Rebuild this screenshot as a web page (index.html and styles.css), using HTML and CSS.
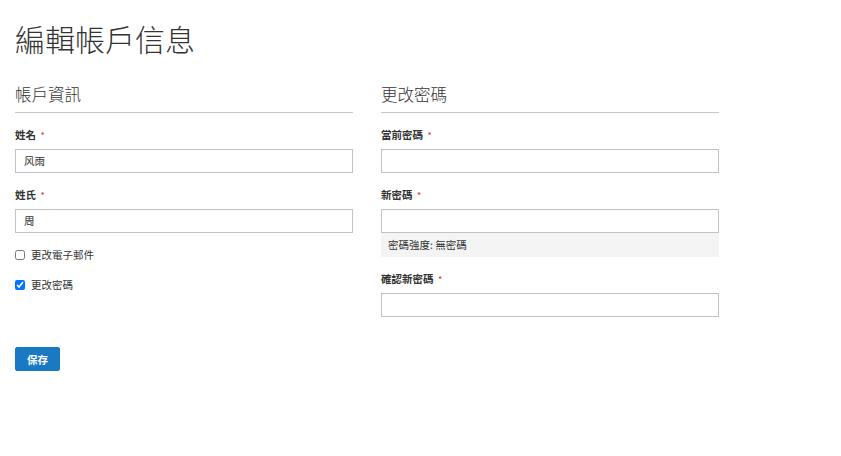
FILE: index.html
```html
<!DOCTYPE html>
<html lang="zh-Hant">
<head>
<meta charset="utf-8">
<title>編輯帳戶信息</title>
<link rel="stylesheet" href="styles.css">
</head>
<body>
<h1 class="page-title">編輯帳戶信息</h1>
<form class="account-form">
  <div class="columns">
    <fieldset class="fieldset">
      <legend class="legend">帳戶資訊</legend>
      <div class="field">
        <label class="label">姓名 <span class="req">*</span></label>
        <div class="input">风雨</div>
      </div>
      <div class="field">
        <label class="label">姓氏 <span class="req">*</span></label>
        <div class="input">周</div>
      </div>
      <div class="choice">
        <input type="checkbox" class="checkbox" id="c1">
        <label for="c1">更改電子郵件</label>
      </div>
      <div class="choice">
        <input type="checkbox" class="checkbox" id="c2" checked>
        <label for="c2">更改密碼</label>
      </div>
    </fieldset>
    <fieldset class="fieldset">
      <legend class="legend">更改密碼</legend>
      <div class="field">
        <label class="label">當前密碼 <span class="req">*</span></label>
        <div class="input"></div>
      </div>
      <div class="field">
        <label class="label">新密碼 <span class="req">*</span></label>
        <div class="input"></div>
        <div class="meter">密碼強度: 無密碼</div>
      </div>
      <div class="field field-confirm">
        <label class="label">確認新密碼 <span class="req">*</span></label>
        <div class="input"></div>
      </div>
    </fieldset>
  </div>
  <div class="actions">
    <button type="button" class="btn-primary">保存</button>
  </div>
</form>
</body>
</html>
```
FILE: styles.css
```css
* { box-sizing: border-box; }
html, body { background: #fff; }
body {
  margin: 0;
  padding: 0 15px;
  font-family: "Noto Sans CJK TC", "Noto Sans", "Liberation Sans", sans-serif;
  color: #333;
  font-size: 10.5px;
}
.page-title {
  margin: 14px 0 0;
  font-size: 30px;
  font-weight: 300;
  line-height: 48px;
}
.columns {
  display: flex;
  gap: 28px;
  margin-top: 20px;
}
.fieldset {
  width: 338px;
  border: 0;
  margin: 0;
  padding: 0;
  min-width: 0;
}
.legend {
  display: block;
  width: 100%;
  padding: 0 0 6px;
  font-size: 16.5px;
  font-weight: 300;
  line-height: 24px;
  border-bottom: 1px solid #c6c6c6;
  margin-bottom: 15px;
}
.field { margin-bottom: 15px; }
.label {
  display: block;
  font-weight: 700;
  line-height: 14px;
  margin-bottom: 6px;
}
.req {
  color: #e02b27;
  font-weight: 400;
  font-size: 9px;
  margin-left: 2px;
}
.input {
  height: 24px;
  border: 1px solid #c2c2c2;
  padding: 0 8px;
  line-height: 22px;
  font-size: 10.5px;
}
.meter {
  height: 24px;
  background: #f4f4f4;
  padding: 0 7px;
  line-height: 24px;
}
.field-confirm { margin-top: 15px; }
.choice {
  display: flex;
  align-items: center;
  gap: 6px;
  height: 14px;
  margin-bottom: 16px;
}
.choice label { line-height: 14px; }
.checkbox {
  width: 10px;
  height: 10px;
  margin: 0;
}
.actions { margin-top: 15px; }
.btn-primary {
  width: 45px;
  height: 24px;
  background: #1979c3;
  border: 1px solid #1979c3;
  border-radius: 2px;
  color: #fff;
  font-family: inherit;
  font-weight: 700;
  font-size: 10.5px;
  padding: 0;
}
```
